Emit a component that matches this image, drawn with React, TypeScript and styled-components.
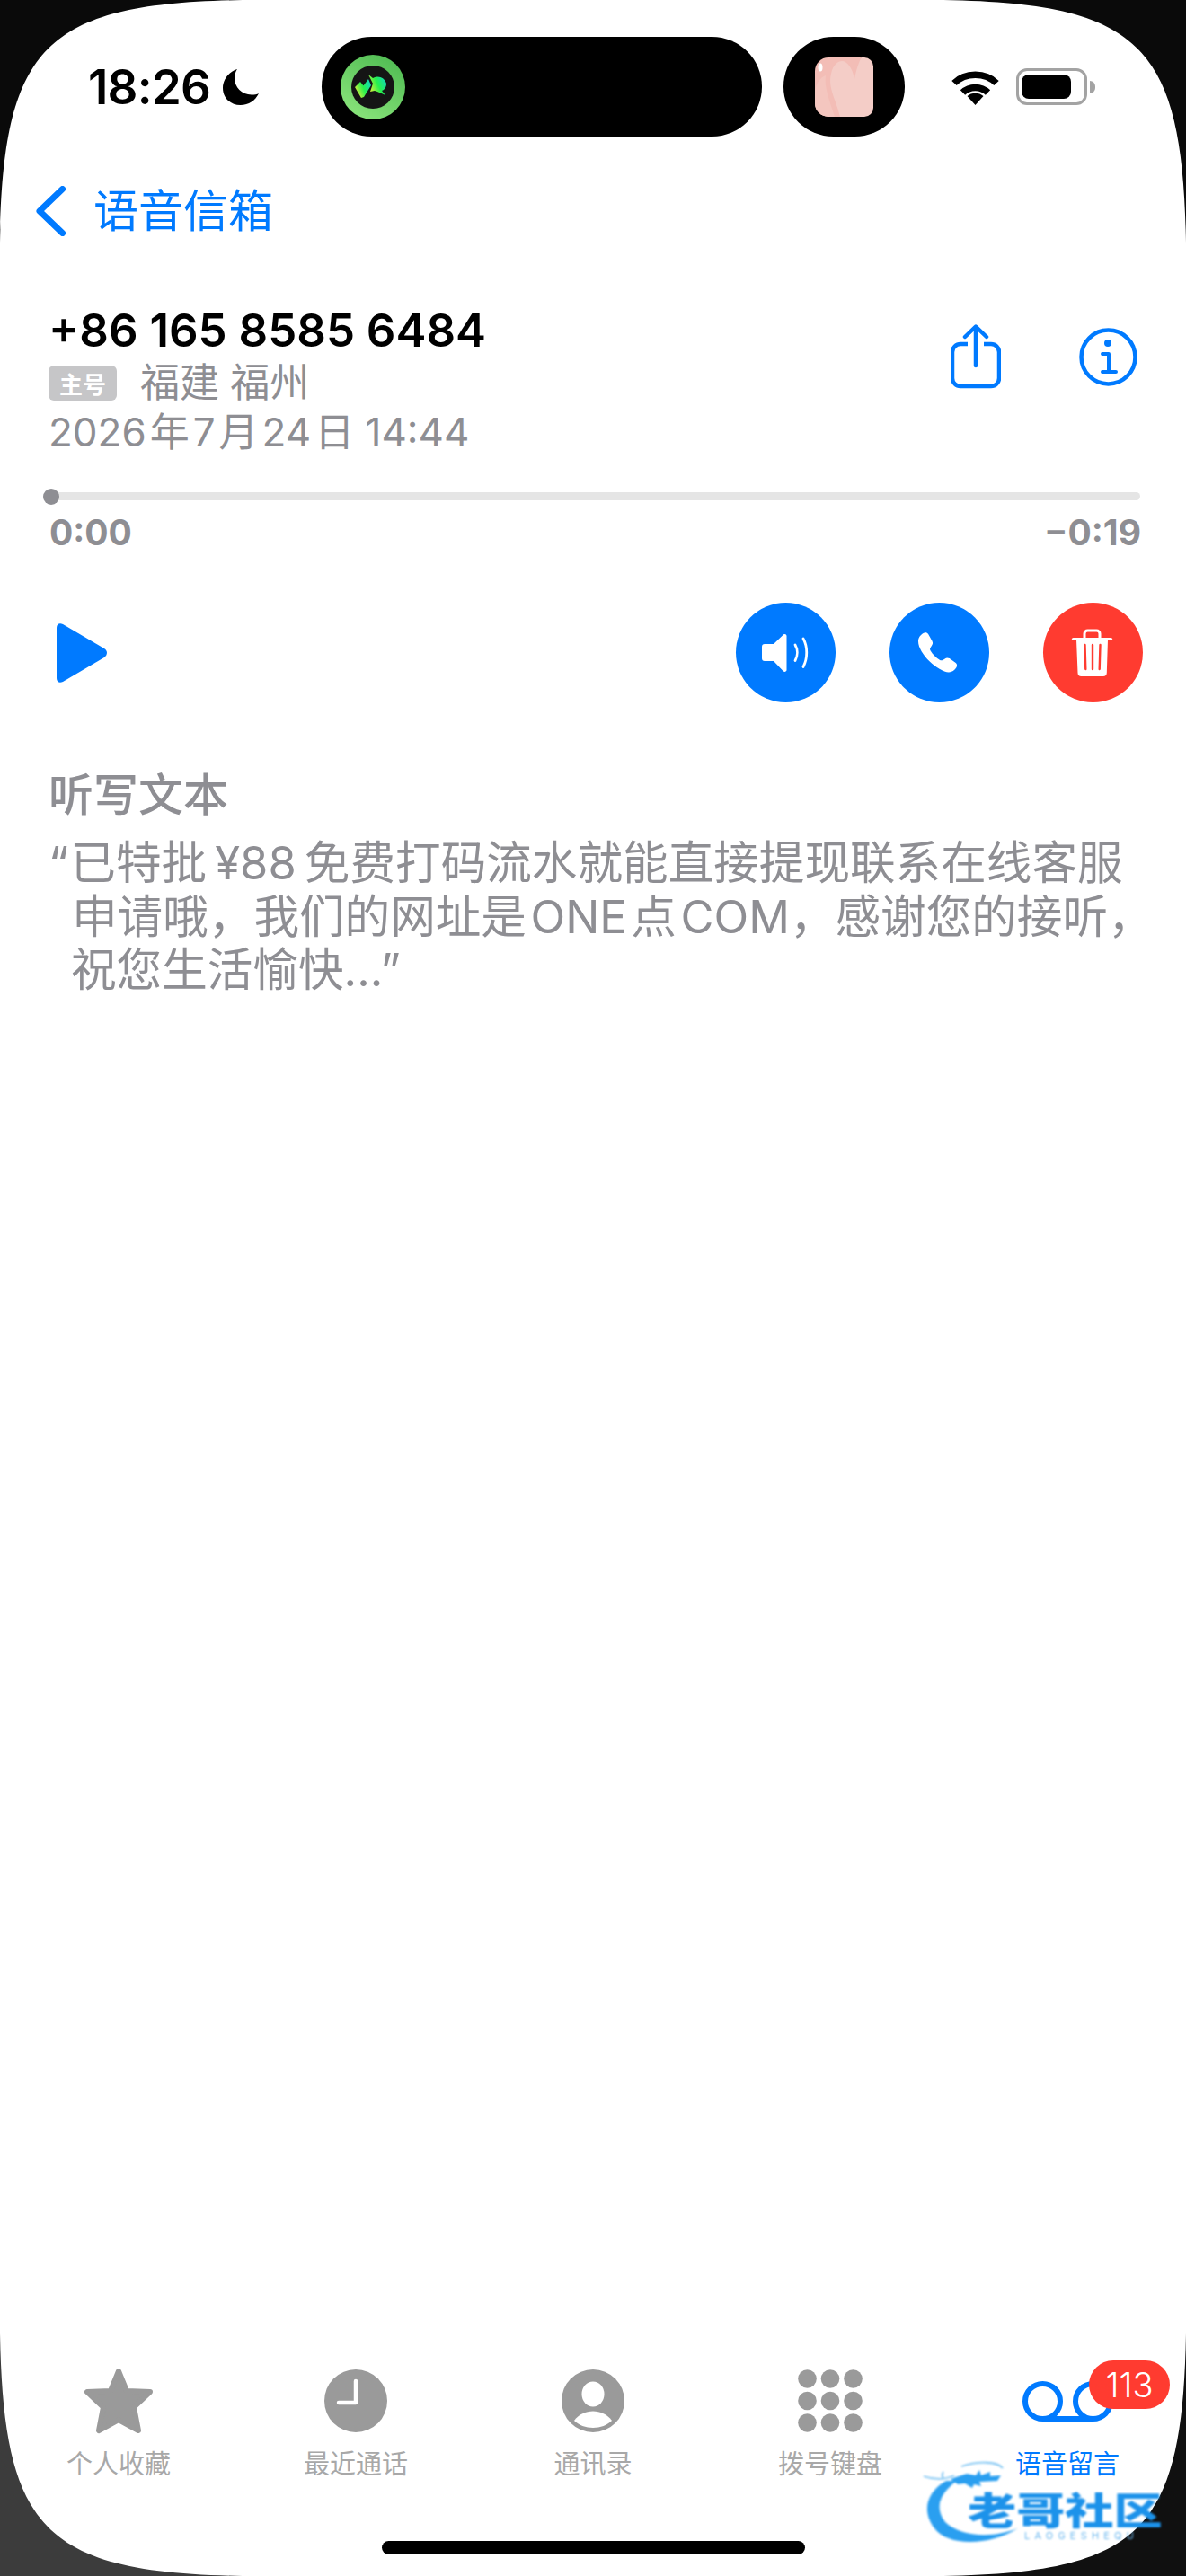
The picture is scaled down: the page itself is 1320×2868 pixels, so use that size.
import styled, { createGlobalStyle } from "styled-components";

const GlobalStyle = createGlobalStyle`
  html, body {
    margin: 0;
    padding: 0;
    background: #fff;
  }
  * {
    box-sizing: border-box;
  }
`;

const FONT = `Inter, "Noto Sans CJK SC", sans-serif`;
const BLUE = "#007aff";
const GRAY = "#8e8e93";
const RED = "#ff3b30";

const Page = styled.div`
  position: relative;
  width: 1320px;
  height: 2868px;
  overflow: hidden;
  display: flex;
  flex-direction: column;
  background: #fff;
  font-family: ${FONT};
`;

const Corner = styled.svg<{ $place: "tl" | "tr" | "bl" | "br" }>`
  position: absolute;
  width: 270px;
  height: 270px;
  ${({ $place }) => ($place[0] === "t" ? "top: 0;" : "bottom: 0;")}
  ${({ $place }) => ($place[1] === "l" ? "left: 0;" : "right: 0;")}
  transform: scale(${({ $place }) => ($place[1] === "l" ? 1 : -1)}, ${({ $place }) => ($place[0] === "t" ? 1 : -1)});
`;

const StatusBar = styled.div`
  display: flex;
  align-items: center;
  height: 111px;
  margin-top: 41px;
  padding-left: 98px;
`;

const Clock = styled.div`
  display: flex;
  align-items: center;
  gap: 14px;
  width: 260px;
  font-size: 53px;
  font-weight: 600;
  letter-spacing: -0.8px;
  color: #000;
`;

const Island = styled.div<{ $wide?: boolean }>`
  display: flex;
  align-items: center;
  justify-content: ${({ $wide }) => ($wide ? "flex-start" : "center")};
  width: ${({ $wide }) => ($wide ? "490px" : "135px")};
  height: 111px;
  margin-right: ${({ $wide }) => ($wide ? "24px" : "52px")};
  padding-left: ${({ $wide }) => ($wide ? "21px" : "0")};
  border-radius: 56px;
  background: #000;
`;

const StatusIcons = styled.div`
  display: flex;
  align-items: center;
  gap: 19px;
`;

const Battery = styled.div`
  display: flex;
  align-items: center;
  gap: 3px;
`;

const BatteryShell = styled.div`
  display: flex;
  align-items: center;
  width: 79px;
  height: 41px;
  padding-left: 3px;
  border: 3.5px solid #a3a3a3;
  border-radius: 12px;
`;

const BatteryLevel = styled.div`
  width: 55px;
  height: 27px;
  border-radius: 8px;
  background: #000;
`;

const BatteryNub = styled.div`
  width: 6px;
  height: 14px;
  border-radius: 0 6px 6px 0;
  background: #a3a3a3;
`;

const BackRow = styled.div`
  display: flex;
  align-items: center;
  gap: 31px;
  margin-top: 55px;
  padding-left: 40px;
  height: 56px;
`;

const BackLabel = styled.span`
  font-size: 50px;
  line-height: 56px;
  color: ${BLUE};
`;

const Header = styled.div`
  display: flex;
  justify-content: space-between;
  align-items: flex-start;
  margin-top: 75px;
  padding: 0 54px 0 54px;
`;

const Caller = styled.div`
  display: flex;
  flex-direction: column;
`;

const Phone = styled.div`
  font-size: 51px;
  line-height: 60px;
  font-weight: 600;
  color: #000;
`;

const MetaRow = styled.div`
  display: flex;
  align-items: center;
  gap: 26px;
  height: 56px;
`;

const SimTag = styled.span`
  display: flex;
  align-items: center;
  justify-content: center;
  width: 76px;
  height: 39px;
  border-radius: 6px;
  background: #c6c6c8;
  color: #fff;
  font-size: 26px;
  font-weight: 700;
`;

const Muted = styled.div`
  font-size: 44px;
  line-height: 54px;
  color: ${GRAY};
`;

const HeaderActions = styled.div`
  display: flex;
  align-items: center;
  gap: 87px;
  margin-top: 23px;
`;

const Track = styled.div`
  position: relative;
  height: 9px;
  margin: 40px 51px 0 57px;
  border-radius: 5px;
  background: #e5e5e5;
`;

const Thumb = styled.div`
  position: absolute;
  left: -9px;
  top: -4.5px;
  width: 18px;
  height: 18px;
  border-radius: 50%;
  background: ${GRAY};
`;

const Times = styled.div`
  display: flex;
  justify-content: space-between;
  margin-top: 12px;
  padding: 0 50px 0 55px;
  font-size: 39px;
  line-height: 48px;
  font-weight: 700;
  color: ${GRAY};
`;

const Controls = styled.div`
  display: flex;
  align-items: center;
  justify-content: space-between;
  height: 111px;
  margin-top: 54px;
  padding: 0 48px 0 63px;
`;

const ControlButtons = styled.div`
  display: flex;
  gap: 60px;
`;

const RoundButton = styled.button<{ $color: string }>`
  display: flex;
  width: 111px;
  height: 111px;
  padding: 0;
  border: none;
  border-radius: 50%;
  background: ${({ $color }) => $color};
`;

const Transcript = styled.div`
  margin-top: 73px;
  padding-left: 54px;
  color: ${GRAY};
`;

const TranscriptTitle = styled.div`
  font-size: 50px;
  line-height: 60px;
  font-weight: 500;
`;

const TranscriptBody = styled.div`
  margin-top: 16px;
  font-size: 50.6px;
  line-height: 59.5px;
  white-space: nowrap;
`;

const BodyLine = styled.div<{ $indent: number }>`
  padding-left: ${({ $indent }) => $indent}px;
`;

const OpenQuote = styled.span`
  margin-right: 2px;
`;

const TabBar = styled.div`
  display: grid;
  grid-template-columns: repeat(5, 264px);
  margin-top: auto;
`;

const Tab = styled.div<{ $active?: boolean }>`
  position: relative;
  display: flex;
  flex-direction: column;
  align-items: center;
  color: ${({ $active }) => ($active ? BLUE : "#a8a8a8")};
`;

const TabIcon = styled.div`
  display: flex;
  align-items: center;
  justify-content: center;
  height: 74px;
`;

const TabLabel = styled.span`
  margin-top: 16px;
  font-size: 29px;
  line-height: 36px;
`;

const CountBadge = styled.span`
  position: absolute;
  left: 156px;
  top: -8px;
  display: flex;
  align-items: center;
  justify-content: center;
  width: 90px;
  height: 54px;
  border-radius: 27px;
  background: ${RED};
  color: #fff;
  font-size: 38px;
  font-weight: 300;
`;

const HomeBar = styled.div`
  width: 471px;
  height: 15px;
  margin: 67px auto 24px;
  border-radius: 8px;
  background: #000;
`;

const Watermark = styled.div`
  position: absolute;
  left: 1020px;
  top: 2730px;
  width: 300px;
  height: 138px;
  filter: blur(0.9px);
  overflow: hidden;
`;

const WatermarkName = styled.span`
  position: absolute;
  left: 57px;
  top: 36px;
  font-size: 42px;
  line-height: 60px;
  font-weight: 900;
  white-space: nowrap;
  color: #1c92ea;
  transform: scaleX(1.29);
  transform-origin: left center;
`;

const WatermarkSub = styled.span`
  position: absolute;
  left: 120px;
  top: 87px;
  font-size: 11px;
  line-height: 13px;
  letter-spacing: 5.2px;
  white-space: nowrap;
  color: #6db8ee;
`;

function Moon() {
  return (
    <svg width="40" height="40" viewBox="0 0 40 40">
      <path d="M16 0C7 3 0 11 0 21c0 11 8.500 19 19.500 19C29 40 36 35 40 27c-2 1-5 1.500-8 1.500C21 28.500 13 20 13 10 13 6 14 3 16 0z" fill="#000" />
    </svg>
  );
}

function PhoneAppLogo() {
  return (
    <svg width="72" height="72" viewBox="0 0 72 72">
      <defs>
        <linearGradient id="ring" x1="0.2" y1="1" x2="0.8" y2="0">
          <stop offset="0" stopColor="#8be57c" />
          <stop offset="1" stopColor="#4fbb52" />
        </linearGradient>
        <linearGradient id="bolt" x1="0" y1="0.8" x2="1" y2="0.3">
          <stop offset="0" stopColor="#f4f23a" />
          <stop offset="0.55" stopColor="#27f04c" />
          <stop offset="1" stopColor="#12d9b8" />
        </linearGradient>
      </defs>
      <circle cx="36" cy="36" r="36" fill="url(#ring)" />
      <circle cx="36" cy="36" r="24" fill="#151515" />
      <path d="M31 22l5 4a10 10 0 0 1 15 6c0 4-2 7-5 8l4 5-9-4-3-1-5 1 3-9z" fill="url(#bolt)" />
      <path d="M16 36l6-6 4 5-1 0 6-8 3 7-8 13-3 1z" fill="url(#bolt)" />
    </svg>
  );
}

function LiveThumb() {
  return (
    <svg width="65" height="66" viewBox="0 0 65 66">
      <rect width="65" height="66" rx="15" fill="#f3bdb6" />
      <path d="M28 66C24 48 14 34 18 18 20 8 26 4 30 4c6 0 12 8 14 20 2-10 5-20 8-24h3a10 10 0 0 1 10 10v46a10 10 0 0 1-10 10z" fill="#f4cdc7" />
      <path d="M0 40C0 30 6 22 12 20c-2 12 4 28 10 46H15A15 15 0 0 1 0 51z" fill="#f4c6bf" />
      <ellipse cx="6" cy="11" rx="2.500" ry="4.500" fill="#fff" />
    </svg>
  );
}

function Wifi() {
  return (
    <svg width="53" height="40" viewBox="0 0 53 40">
      <path d="M3 15.500C15 3 38 3 50 15.500" fill="none" stroke="#000" strokeWidth="7.500" />
      <path d="M12.500 26C20 18.500 33 18.500 40.500 26" fill="none" stroke="#000" strokeWidth="7.500" />
      <path d="M26.500 40L17.500 30C22 25.500 31 25.500 35.500 30z" fill="#000" />
    </svg>
  );
}

function Chevron() {
  return (
    <svg width="33" height="56" viewBox="0 0 33 56">
      <path d="M29.500 3.500L4 28l25.500 24.500" fill="none" stroke={BLUE} strokeWidth="7" strokeLinecap="round" strokeLinejoin="round" />
    </svg>
  );
}

function ShareIcon() {
  return (
    <svg width="56" height="72" viewBox="0 0 56 72">
      <path d="M19 22H11a9 9 0 0 0-9 9v29a9 9 0 0 0 9 9h34a9 9 0 0 0 9-9V31a9 9 0 0 0-9-9h-8" fill="none" stroke={BLUE} strokeWidth="4.500" />
      <path d="M28 46V3M16 14L28 2.500 40 14" fill="none" stroke={BLUE} strokeWidth="4.500" strokeLinecap="round" strokeLinejoin="round" />
    </svg>
  );
}

function InfoIcon() {
  return (
    <svg width="65" height="65" viewBox="0 0 65 65">
      <circle cx="32.500" cy="32.500" r="30" fill="none" stroke={BLUE} strokeWidth="4.500" />
      <circle cx="32" cy="17" r="4" fill={BLUE} />
      <path d="M26 29h7v20M26 49h15" fill="none" stroke={BLUE} strokeWidth="4" strokeLinecap="round" strokeLinejoin="round" />
    </svg>
  );
}

function PlayIcon() {
  return (
    <svg width="56" height="66" viewBox="0 0 56 66">
      <path d="M0 5C0 1 3-1 7 1l46 27c4 2.500 4 7 0 10L7 65c-4 2-7 0-7-4z" fill={BLUE} />
    </svg>
  );
}

function SpeakerIcon() {
  return (
    <svg width="111" height="111" viewBox="0 0 111 111">
      <path d="M32 46h10l11-10.500c1.500-1 3.500 0 3.500 1.500v38c0 1.500-2 2.500-3.500 1.500L42 65H32c-2 0-3-1-3-3V49c0-2 1-3 3-3z" fill="#fff" />
      <path d="M66 47c3 5 3 12 0 17.500M75 40c5 9 5 22 0 31.500" fill="none" stroke="#fff" strokeWidth="2.800" strokeLinecap="round" />
    </svg>
  );
}

function CallIcon() {
  return (
    <svg width="111" height="111" viewBox="0 0 111 111">
      <path d="M38 33.800c2-1 4-.6 5 1l4.500 8c1 2 .6 3.500-.5 5l-1.500 2.500c-.7 1.200-.5 2.200.3 3.400 2.500 4 6 7.600 10 10 1.200.7 2.200.9 3.400.2l2.500-1.500c1.500-1 3-1.200 5-.3l7 5c1.500 1 1.800 3 .8 5-2 3.500-5 5.400-8.500 5.400C54 77 32 57 32 43c0-4 2.500-7.200 6-9.200z" fill="#fff" />
    </svg>
  );
}

function TrashIcon() {
  return (
    <svg width="111" height="111" viewBox="0 0 111 111">
      <path d="M33.500 40.500h42" stroke="#fff" strokeWidth="3.200" strokeLinecap="round" />
      <path d="M46 40v-5.500c0-2 1.500-3.500 3.500-3.500h10c2 0 3.500 1.500 3.500 3.500V40" fill="none" stroke="#fff" strokeWidth="3" />
      <path d="M37 41h35l-1.200 37c0 2.500-1.500 4-4 4H42.500c-2.500 0-4-1.500-4-4z" fill="#fff" />
      <path d="M46.500 47l.8 27M55 47v27M63.500 47l-.8 27" stroke={RED} strokeWidth="2.400" strokeLinecap="round" />
    </svg>
  );
}

function StarIcon() {
  return (
    <svg width="76" height="74" viewBox="0 0 76 74">
      <path d="M38 4l9 22 26 1-18 17 5 26-22-12-22 12 5-26L3 27l26-1z" fill="#9a9a9a" stroke="#9a9a9a" strokeWidth="6" strokeLinejoin="round" />
    </svg>
  );
}

function RecentsIcon() {
  return (
    <svg width="70" height="70" viewBox="0 0 70 70">
      <circle cx="35" cy="35" r="35" fill="#9a9a9a" />
      <path d="M35 13v24H16" fill="none" stroke="#fff" strokeWidth="4.500" strokeLinecap="round" strokeLinejoin="round" />
    </svg>
  );
}

function ContactIcon() {
  return (
    <svg width="70" height="70" viewBox="0 0 70 70">
      <circle cx="35" cy="35" r="35" fill="#9a9a9a" />
      <ellipse cx="35" cy="27.500" rx="12.500" ry="14" fill="#fff" />
      <path d="M14 57c10-14 32-14 42 0-5 5-13 8-21 8s-16-3-21-8z" fill="#fff" />
    </svg>
  );
}

function KeypadIcon() {
  const centers = [10.5, 36, 61.5];
  const rows = [10.5, 35, 59.5];
  return (
    <svg width="72" height="70" viewBox="0 0 72 70">
      {rows.map((cy) =>
        centers.map((cx) => <circle key={`${cx}-${cy}`} cx={cx} cy={cy} r="10.3" fill="#9a9a9a" />)
      )}
    </svg>
  );
}

function VoicemailIcon() {
  return (
    <svg width="101" height="45" viewBox="0 0 101 45">
      <circle cx="22.5" cy="22.5" r="19.5" fill="none" stroke={BLUE} strokeWidth="6" />
      <circle cx="78.5" cy="22.5" r="19.5" fill="none" stroke={BLUE} strokeWidth="6" />
      <path d="M22.500 42h56" stroke={BLUE} strokeWidth="6" />
    </svg>
  );
}

const tabs = [
  { label: "个人收藏", icon: <StarIcon /> },
  { label: "最近通话", icon: <RecentsIcon /> },
  { label: "通讯录", icon: <ContactIcon /> },
  { label: "拨号键盘", icon: <KeypadIcon /> },
  { label: "语音留言", icon: <VoicemailIcon />, active: true, badge: "113" },
];

const cornerPath = "M0 0H270C50 4 4 50 0 270z";

export default function App() {
  return (
    <Page>
      <GlobalStyle />
      <StatusBar>
        <Clock>
          18:26
          <Moon />
        </Clock>
        <Island $wide>
          <PhoneAppLogo />
        </Island>
        <Island>
          <LiveThumb />
        </Island>
        <StatusIcons>
          <Wifi />
          <Battery>
            <BatteryShell>
              <BatteryLevel />
            </BatteryShell>
            <BatteryNub />
          </Battery>
        </StatusIcons>
      </StatusBar>

      <BackRow>
        <Chevron />
        <BackLabel>语音信箱</BackLabel>
      </BackRow>

      <Header>
        <Caller>
          <Phone>+86 165 8585 6484</Phone>
          <MetaRow>
            <SimTag>主号</SimTag>
            <Muted>福建 福州</Muted>
          </MetaRow>
          <Muted>2026&#8202;年&#8202;7&#8202;月&#8202;24&#8202;日 14:44</Muted>
        </Caller>
        <HeaderActions>
          <ShareIcon />
          <InfoIcon />
        </HeaderActions>
      </Header>

      <Track>
        <Thumb />
      </Track>
      <Times>
        <span>0:00</span>
        <span>−0:19</span>
      </Times>

      <Controls>
        <PlayIcon />
        <ControlButtons>
          <RoundButton $color={BLUE}>
            <SpeakerIcon />
          </RoundButton>
          <RoundButton $color={BLUE}>
            <CallIcon />
          </RoundButton>
          <RoundButton $color={RED}>
            <TrashIcon />
          </RoundButton>
        </ControlButtons>
      </Controls>

      <Transcript>
        <TranscriptTitle>听写文本</TranscriptTitle>
        <TranscriptBody>
          <BodyLine $indent={0}>
            <OpenQuote>“</OpenQuote>已特批&#8201;¥88&#8201;免费打码流水就能直接提现联系在线客服
          </BodyLine>
          <BodyLine $indent={26}>申请哦，我们的网址是&#8202;ONE&#8202;点&#8202;COM，感谢您的接听，</BodyLine>
          <BodyLine $indent={25}>祝您生活愉快...”</BodyLine>
        </TranscriptBody>
      </Transcript>

      <TabBar>
        {tabs.map((tab) => (
          <Tab key={tab.label} $active={tab.active}>
            <TabIcon>{tab.icon}</TabIcon>
            <TabLabel>{tab.label}</TabLabel>
            {tab.badge && <CountBadge>{tab.badge}</CountBadge>}
          </Tab>
        ))}
      </TabBar>
      <HomeBar />

      <Corner $place="tl" viewBox="0 0 270 270"><path d={cornerPath} fill="#0a0a0a" /></Corner>
      <Corner $place="tr" viewBox="0 0 270 270"><path d={cornerPath} fill="#0a0a0a" /></Corner>
      <Corner $place="bl" viewBox="0 0 270 270"><path d={cornerPath} fill="#3c3c3c" /></Corner>
      <Corner $place="br" viewBox="0 0 270 270"><path d={cornerPath} fill="#101010" /></Corner>

      <Watermark>
        <svg width="300" height="138" viewBox="0 0 300 138">
          <path d="M33 32C12 44 5 65 20 85c15 20 60 20 93 0-28 11-63 10-81-7-12-16-7-31 13-46z" fill="#2a9ff0" />
          <path d="M38 30l18-6 10 2 4-6 2 6 10-4 0 5 12-1-4 6-20 1 2 5-8-2-2 4-8-5-8 1z" fill="#2a9ff0" />
          <path d="M8 27c12 4 24 4 34-1M30 22c-2 3-2 5 0 7M50 16c18-6 40-6 46 2" fill="none" stroke="#7cc4f2" strokeWidth="1.800" />
        </svg>
        <WatermarkName>老哥社区</WatermarkName>
        <WatermarkSub>LAOGESHEQU</WatermarkSub>
      </Watermark>
    </Page>
  );
}
